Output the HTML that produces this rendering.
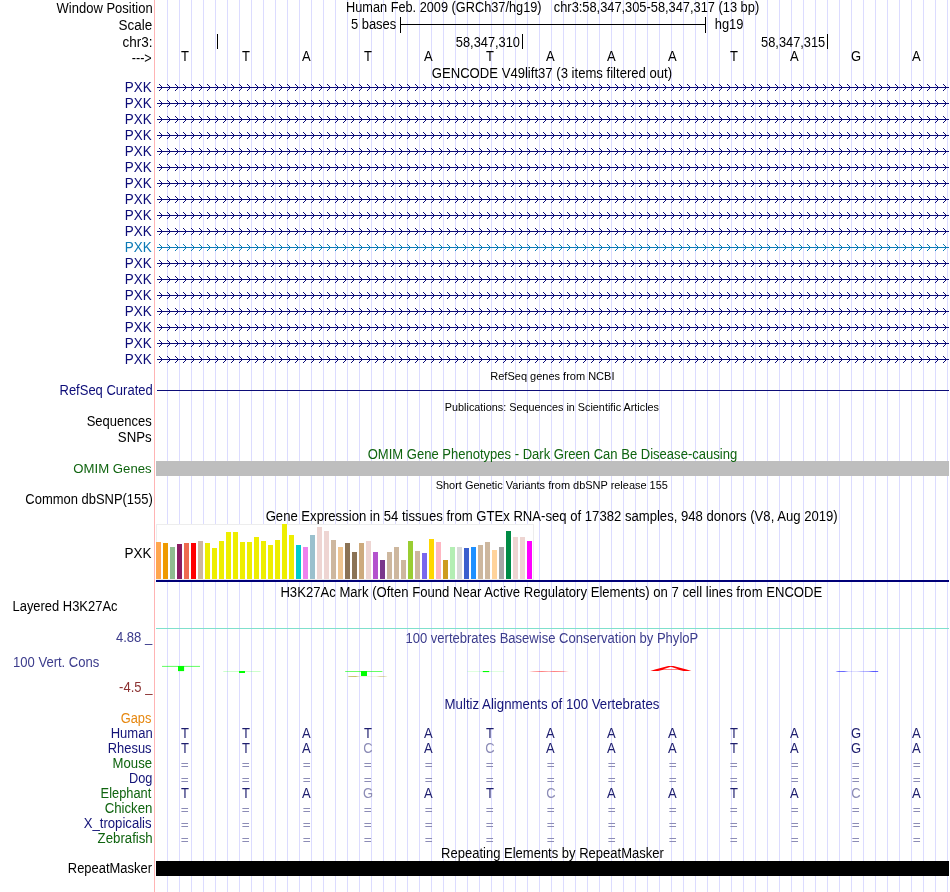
<!DOCTYPE html>
<html><head><meta charset="utf-8"><title>UCSC Genome Browser - chr3:58,347,305-58,347,317</title>
<style>
html,body{margin:0;padding:0;background:#fff;}
body{width:950px;height:892px;overflow:hidden;}
svg{display:block;font-family:"Liberation Sans", sans-serif;will-change:transform;}
text{white-space:pre;font-size:13px;}
.s{font-size:11px;}
.c{text-anchor:middle;}
</style></head><body>
<svg width="950" height="892" viewBox="0 0 950 892">
<path d="M167.5 0V892 M179.5 0V892 M191.5 0V892 M203.5 0V892 M215.5 0V892 M227.5 0V892 M239.5 0V892 M251.5 0V892 M263.5 0V892 M275.5 0V892 M287.5 0V892 M299.5 0V892 M311.5 0V892 M323.5 0V892 M335.5 0V892 M347.5 0V892 M359.5 0V892 M371.5 0V892 M383.5 0V892 M395.5 0V892 M407.5 0V892 M419.5 0V892 M431.5 0V892 M443.5 0V892 M455.5 0V892 M467.5 0V892 M479.5 0V892 M491.5 0V892 M503.5 0V892 M515.5 0V892 M527.5 0V892 M539.5 0V892 M551.5 0V892 M563.5 0V892 M575.5 0V892 M587.5 0V892 M599.5 0V892 M611.5 0V892 M623.5 0V892 M635.5 0V892 M647.5 0V892 M659.5 0V892 M671.5 0V892 M683.5 0V892 M695.5 0V892 M707.5 0V892 M719.5 0V892 M731.5 0V892 M743.5 0V892 M755.5 0V892 M767.5 0V892 M779.5 0V892 M791.5 0V892 M803.5 0V892 M815.5 0V892 M827.5 0V892 M839.5 0V892 M851.5 0V892 M863.5 0V892 M875.5 0V892 M887.5 0V892 M899.5 0V892 M911.5 0V892 M923.5 0V892 M935.5 0V892 M947.5 0V892" stroke="#dcdcff" stroke-width="1" fill="none" shape-rendering="crispEdges"/>
<path d="M154.5 0V892" stroke="#ffb4b4" stroke-width="1" fill="none" shape-rendering="crispEdges"/>
<path d="M400.5 17V33M705.5 17V33M401 24.5H705M217.5 34V49M522.5 34V49M827.5 34V49" stroke="#000" stroke-width="1" fill="none" shape-rendering="crispEdges"/>
<text class="c" transform="translate(185 61) scale(1 1.055)">T</text>
<text class="c" transform="translate(246 61) scale(1 1.055)">T</text>
<text class="c" transform="translate(306.3 61) scale(1 1.055)">A</text>
<text class="c" transform="translate(368 61) scale(1 1.055)">T</text>
<text class="c" transform="translate(428.3 61) scale(1 1.055)">A</text>
<text class="c" transform="translate(490 61) scale(1 1.055)">T</text>
<text class="c" transform="translate(550.3 61) scale(1 1.055)">A</text>
<text class="c" transform="translate(611.3 61) scale(1 1.055)">A</text>
<text class="c" transform="translate(672.3 61) scale(1 1.055)">A</text>
<text class="c" transform="translate(734 61) scale(1 1.055)">T</text>
<text class="c" transform="translate(794.3 61) scale(1 1.055)">A</text>
<text class="c" transform="translate(856 61) scale(1 1.055)">G</text>
<text class="c" transform="translate(916.3 61) scale(1 1.055)">A</text>
<defs><path id="cv" d="M157 0h792v1h-792zM159 -3h1v1h-1zm1 1h1v1h-1zm1 1h1v1h-1zm0 2h1v1h-1zm-1 1h1v1h-1zm-1 1h1v1h-1zm8 -6h1v1h-1zm1 1h1v1h-1zm1 1h1v1h-1zm0 2h1v1h-1zm-1 1h1v1h-1zm-1 1h1v1h-1zm8 -6h1v1h-1zm1 1h1v1h-1zm1 1h1v1h-1zm0 2h1v1h-1zm-1 1h1v1h-1zm-1 1h1v1h-1zm8 -6h1v1h-1zm1 1h1v1h-1zm1 1h1v1h-1zm0 2h1v1h-1zm-1 1h1v1h-1zm-1 1h1v1h-1zm8 -6h1v1h-1zm1 1h1v1h-1zm1 1h1v1h-1zm0 2h1v1h-1zm-1 1h1v1h-1zm-1 1h1v1h-1zm8 -6h1v1h-1zm1 1h1v1h-1zm1 1h1v1h-1zm0 2h1v1h-1zm-1 1h1v1h-1zm-1 1h1v1h-1zm8 -6h1v1h-1zm1 1h1v1h-1zm1 1h1v1h-1zm0 2h1v1h-1zm-1 1h1v1h-1zm-1 1h1v1h-1zm8 -6h1v1h-1zm1 1h1v1h-1zm1 1h1v1h-1zm0 2h1v1h-1zm-1 1h1v1h-1zm-1 1h1v1h-1zm8 -6h1v1h-1zm1 1h1v1h-1zm1 1h1v1h-1zm0 2h1v1h-1zm-1 1h1v1h-1zm-1 1h1v1h-1zm8 -6h1v1h-1zm1 1h1v1h-1zm1 1h1v1h-1zm0 2h1v1h-1zm-1 1h1v1h-1zm-1 1h1v1h-1zm8 -6h1v1h-1zm1 1h1v1h-1zm1 1h1v1h-1zm0 2h1v1h-1zm-1 1h1v1h-1zm-1 1h1v1h-1zm8 -6h1v1h-1zm1 1h1v1h-1zm1 1h1v1h-1zm0 2h1v1h-1zm-1 1h1v1h-1zm-1 1h1v1h-1zm8 -6h1v1h-1zm1 1h1v1h-1zm1 1h1v1h-1zm0 2h1v1h-1zm-1 1h1v1h-1zm-1 1h1v1h-1zm8 -6h1v1h-1zm1 1h1v1h-1zm1 1h1v1h-1zm0 2h1v1h-1zm-1 1h1v1h-1zm-1 1h1v1h-1zm8 -6h1v1h-1zm1 1h1v1h-1zm1 1h1v1h-1zm0 2h1v1h-1zm-1 1h1v1h-1zm-1 1h1v1h-1zm8 -6h1v1h-1zm1 1h1v1h-1zm1 1h1v1h-1zm0 2h1v1h-1zm-1 1h1v1h-1zm-1 1h1v1h-1zm8 -6h1v1h-1zm1 1h1v1h-1zm1 1h1v1h-1zm0 2h1v1h-1zm-1 1h1v1h-1zm-1 1h1v1h-1zm8 -6h1v1h-1zm1 1h1v1h-1zm1 1h1v1h-1zm0 2h1v1h-1zm-1 1h1v1h-1zm-1 1h1v1h-1zm8 -6h1v1h-1zm1 1h1v1h-1zm1 1h1v1h-1zm0 2h1v1h-1zm-1 1h1v1h-1zm-1 1h1v1h-1zm8 -6h1v1h-1zm1 1h1v1h-1zm1 1h1v1h-1zm0 2h1v1h-1zm-1 1h1v1h-1zm-1 1h1v1h-1zm8 -6h1v1h-1zm1 1h1v1h-1zm1 1h1v1h-1zm0 2h1v1h-1zm-1 1h1v1h-1zm-1 1h1v1h-1zm8 -6h1v1h-1zm1 1h1v1h-1zm1 1h1v1h-1zm0 2h1v1h-1zm-1 1h1v1h-1zm-1 1h1v1h-1zm8 -6h1v1h-1zm1 1h1v1h-1zm1 1h1v1h-1zm0 2h1v1h-1zm-1 1h1v1h-1zm-1 1h1v1h-1zm8 -6h1v1h-1zm1 1h1v1h-1zm1 1h1v1h-1zm0 2h1v1h-1zm-1 1h1v1h-1zm-1 1h1v1h-1zm8 -6h1v1h-1zm1 1h1v1h-1zm1 1h1v1h-1zm0 2h1v1h-1zm-1 1h1v1h-1zm-1 1h1v1h-1zm8 -6h1v1h-1zm1 1h1v1h-1zm1 1h1v1h-1zm0 2h1v1h-1zm-1 1h1v1h-1zm-1 1h1v1h-1zm8 -6h1v1h-1zm1 1h1v1h-1zm1 1h1v1h-1zm0 2h1v1h-1zm-1 1h1v1h-1zm-1 1h1v1h-1zm8 -6h1v1h-1zm1 1h1v1h-1zm1 1h1v1h-1zm0 2h1v1h-1zm-1 1h1v1h-1zm-1 1h1v1h-1zm8 -6h1v1h-1zm1 1h1v1h-1zm1 1h1v1h-1zm0 2h1v1h-1zm-1 1h1v1h-1zm-1 1h1v1h-1zm8 -6h1v1h-1zm1 1h1v1h-1zm1 1h1v1h-1zm0 2h1v1h-1zm-1 1h1v1h-1zm-1 1h1v1h-1zm8 -6h1v1h-1zm1 1h1v1h-1zm1 1h1v1h-1zm0 2h1v1h-1zm-1 1h1v1h-1zm-1 1h1v1h-1zm8 -6h1v1h-1zm1 1h1v1h-1zm1 1h1v1h-1zm0 2h1v1h-1zm-1 1h1v1h-1zm-1 1h1v1h-1zm8 -6h1v1h-1zm1 1h1v1h-1zm1 1h1v1h-1zm0 2h1v1h-1zm-1 1h1v1h-1zm-1 1h1v1h-1zm8 -6h1v1h-1zm1 1h1v1h-1zm1 1h1v1h-1zm0 2h1v1h-1zm-1 1h1v1h-1zm-1 1h1v1h-1zm8 -6h1v1h-1zm1 1h1v1h-1zm1 1h1v1h-1zm0 2h1v1h-1zm-1 1h1v1h-1zm-1 1h1v1h-1zm8 -6h1v1h-1zm1 1h1v1h-1zm1 1h1v1h-1zm0 2h1v1h-1zm-1 1h1v1h-1zm-1 1h1v1h-1zm8 -6h1v1h-1zm1 1h1v1h-1zm1 1h1v1h-1zm0 2h1v1h-1zm-1 1h1v1h-1zm-1 1h1v1h-1zm8 -6h1v1h-1zm1 1h1v1h-1zm1 1h1v1h-1zm0 2h1v1h-1zm-1 1h1v1h-1zm-1 1h1v1h-1zm8 -6h1v1h-1zm1 1h1v1h-1zm1 1h1v1h-1zm0 2h1v1h-1zm-1 1h1v1h-1zm-1 1h1v1h-1zm8 -6h1v1h-1zm1 1h1v1h-1zm1 1h1v1h-1zm0 2h1v1h-1zm-1 1h1v1h-1zm-1 1h1v1h-1zm8 -6h1v1h-1zm1 1h1v1h-1zm1 1h1v1h-1zm0 2h1v1h-1zm-1 1h1v1h-1zm-1 1h1v1h-1zm8 -6h1v1h-1zm1 1h1v1h-1zm1 1h1v1h-1zm0 2h1v1h-1zm-1 1h1v1h-1zm-1 1h1v1h-1zm8 -6h1v1h-1zm1 1h1v1h-1zm1 1h1v1h-1zm0 2h1v1h-1zm-1 1h1v1h-1zm-1 1h1v1h-1zm8 -6h1v1h-1zm1 1h1v1h-1zm1 1h1v1h-1zm0 2h1v1h-1zm-1 1h1v1h-1zm-1 1h1v1h-1zm8 -6h1v1h-1zm1 1h1v1h-1zm1 1h1v1h-1zm0 2h1v1h-1zm-1 1h1v1h-1zm-1 1h1v1h-1zm8 -6h1v1h-1zm1 1h1v1h-1zm1 1h1v1h-1zm0 2h1v1h-1zm-1 1h1v1h-1zm-1 1h1v1h-1zm8 -6h1v1h-1zm1 1h1v1h-1zm1 1h1v1h-1zm0 2h1v1h-1zm-1 1h1v1h-1zm-1 1h1v1h-1zm8 -6h1v1h-1zm1 1h1v1h-1zm1 1h1v1h-1zm0 2h1v1h-1zm-1 1h1v1h-1zm-1 1h1v1h-1zm8 -6h1v1h-1zm1 1h1v1h-1zm1 1h1v1h-1zm0 2h1v1h-1zm-1 1h1v1h-1zm-1 1h1v1h-1zm8 -6h1v1h-1zm1 1h1v1h-1zm1 1h1v1h-1zm0 2h1v1h-1zm-1 1h1v1h-1zm-1 1h1v1h-1zm8 -6h1v1h-1zm1 1h1v1h-1zm1 1h1v1h-1zm0 2h1v1h-1zm-1 1h1v1h-1zm-1 1h1v1h-1zm8 -6h1v1h-1zm1 1h1v1h-1zm1 1h1v1h-1zm0 2h1v1h-1zm-1 1h1v1h-1zm-1 1h1v1h-1zm8 -6h1v1h-1zm1 1h1v1h-1zm1 1h1v1h-1zm0 2h1v1h-1zm-1 1h1v1h-1zm-1 1h1v1h-1zm8 -6h1v1h-1zm1 1h1v1h-1zm1 1h1v1h-1zm0 2h1v1h-1zm-1 1h1v1h-1zm-1 1h1v1h-1zm8 -6h1v1h-1zm1 1h1v1h-1zm1 1h1v1h-1zm0 2h1v1h-1zm-1 1h1v1h-1zm-1 1h1v1h-1zm8 -6h1v1h-1zm1 1h1v1h-1zm1 1h1v1h-1zm0 2h1v1h-1zm-1 1h1v1h-1zm-1 1h1v1h-1zm8 -6h1v1h-1zm1 1h1v1h-1zm1 1h1v1h-1zm0 2h1v1h-1zm-1 1h1v1h-1zm-1 1h1v1h-1zm8 -6h1v1h-1zm1 1h1v1h-1zm1 1h1v1h-1zm0 2h1v1h-1zm-1 1h1v1h-1zm-1 1h1v1h-1zm8 -6h1v1h-1zm1 1h1v1h-1zm1 1h1v1h-1zm0 2h1v1h-1zm-1 1h1v1h-1zm-1 1h1v1h-1zm8 -6h1v1h-1zm1 1h1v1h-1zm1 1h1v1h-1zm0 2h1v1h-1zm-1 1h1v1h-1zm-1 1h1v1h-1zm8 -6h1v1h-1zm1 1h1v1h-1zm1 1h1v1h-1zm0 2h1v1h-1zm-1 1h1v1h-1zm-1 1h1v1h-1zm8 -6h1v1h-1zm1 1h1v1h-1zm1 1h1v1h-1zm0 2h1v1h-1zm-1 1h1v1h-1zm-1 1h1v1h-1zm8 -6h1v1h-1zm1 1h1v1h-1zm1 1h1v1h-1zm0 2h1v1h-1zm-1 1h1v1h-1zm-1 1h1v1h-1zm8 -6h1v1h-1zm1 1h1v1h-1zm1 1h1v1h-1zm0 2h1v1h-1zm-1 1h1v1h-1zm-1 1h1v1h-1zm8 -6h1v1h-1zm1 1h1v1h-1zm1 1h1v1h-1zm0 2h1v1h-1zm-1 1h1v1h-1zm-1 1h1v1h-1zm8 -6h1v1h-1zm1 1h1v1h-1zm1 1h1v1h-1zm0 2h1v1h-1zm-1 1h1v1h-1zm-1 1h1v1h-1zm8 -6h1v1h-1zm1 1h1v1h-1zm1 1h1v1h-1zm0 2h1v1h-1zm-1 1h1v1h-1zm-1 1h1v1h-1zm8 -6h1v1h-1zm1 1h1v1h-1zm1 1h1v1h-1zm0 2h1v1h-1zm-1 1h1v1h-1zm-1 1h1v1h-1zm8 -6h1v1h-1zm1 1h1v1h-1zm1 1h1v1h-1zm0 2h1v1h-1zm-1 1h1v1h-1zm-1 1h1v1h-1zm8 -6h1v1h-1zm1 1h1v1h-1zm1 1h1v1h-1zm0 2h1v1h-1zm-1 1h1v1h-1zm-1 1h1v1h-1zm8 -6h1v1h-1zm1 1h1v1h-1zm1 1h1v1h-1zm0 2h1v1h-1zm-1 1h1v1h-1zm-1 1h1v1h-1zm8 -6h1v1h-1zm1 1h1v1h-1zm1 1h1v1h-1zm0 2h1v1h-1zm-1 1h1v1h-1zm-1 1h1v1h-1zm8 -6h1v1h-1zm1 1h1v1h-1zm1 1h1v1h-1zm0 2h1v1h-1zm-1 1h1v1h-1zm-1 1h1v1h-1zm8 -6h1v1h-1zm1 1h1v1h-1zm1 1h1v1h-1zm0 2h1v1h-1zm-1 1h1v1h-1zm-1 1h1v1h-1zm8 -6h1v1h-1zm1 1h1v1h-1zm1 1h1v1h-1zm0 2h1v1h-1zm-1 1h1v1h-1zm-1 1h1v1h-1zm8 -6h1v1h-1zm1 1h1v1h-1zm1 1h1v1h-1zm0 2h1v1h-1zm-1 1h1v1h-1zm-1 1h1v1h-1zm8 -6h1v1h-1zm1 1h1v1h-1zm1 1h1v1h-1zm0 2h1v1h-1zm-1 1h1v1h-1zm-1 1h1v1h-1zm8 -6h1v1h-1zm1 1h1v1h-1zm1 1h1v1h-1zm0 2h1v1h-1zm-1 1h1v1h-1zm-1 1h1v1h-1zm8 -6h1v1h-1zm1 1h1v1h-1zm1 1h1v1h-1zm0 2h1v1h-1zm-1 1h1v1h-1zm-1 1h1v1h-1zm8 -6h1v1h-1zm1 1h1v1h-1zm1 1h1v1h-1zm0 2h1v1h-1zm-1 1h1v1h-1zm-1 1h1v1h-1zm8 -6h1v1h-1zm1 1h1v1h-1zm1 1h1v1h-1zm0 2h1v1h-1zm-1 1h1v1h-1zm-1 1h1v1h-1zm8 -6h1v1h-1zm1 1h1v1h-1zm1 1h1v1h-1zm0 2h1v1h-1zm-1 1h1v1h-1zm-1 1h1v1h-1zm8 -6h1v1h-1zm1 1h1v1h-1zm1 1h1v1h-1zm0 2h1v1h-1zm-1 1h1v1h-1zm-1 1h1v1h-1zm8 -6h1v1h-1zm1 1h1v1h-1zm1 1h1v1h-1zm0 2h1v1h-1zm-1 1h1v1h-1zm-1 1h1v1h-1zm8 -6h1v1h-1zm1 1h1v1h-1zm1 1h1v1h-1zm0 2h1v1h-1zm-1 1h1v1h-1zm-1 1h1v1h-1zm8 -6h1v1h-1zm1 1h1v1h-1zm1 1h1v1h-1zm0 2h1v1h-1zm-1 1h1v1h-1zm-1 1h1v1h-1zm8 -6h1v1h-1zm1 1h1v1h-1zm1 1h1v1h-1zm0 2h1v1h-1zm-1 1h1v1h-1zm-1 1h1v1h-1zm8 -6h1v1h-1zm1 1h1v1h-1zm1 1h1v1h-1zm0 2h1v1h-1zm-1 1h1v1h-1zm-1 1h1v1h-1zm8 -6h1v1h-1zm1 1h1v1h-1zm1 1h1v1h-1zm0 2h1v1h-1zm-1 1h1v1h-1zm-1 1h1v1h-1zm8 -6h1v1h-1zm1 1h1v1h-1zm1 1h1v1h-1zm0 2h1v1h-1zm-1 1h1v1h-1zm-1 1h1v1h-1zm8 -6h1v1h-1zm1 1h1v1h-1zm1 1h1v1h-1zm0 2h1v1h-1zm-1 1h1v1h-1zm-1 1h1v1h-1zm8 -6h1v1h-1zm1 1h1v1h-1zm1 1h1v1h-1zm0 2h1v1h-1zm-1 1h1v1h-1zm-1 1h1v1h-1zm8 -6h1v1h-1zm1 1h1v1h-1zm1 1h1v1h-1zm0 2h1v1h-1zm-1 1h1v1h-1zm-1 1h1v1h-1zm8 -6h1v1h-1zm1 1h1v1h-1zm1 1h1v1h-1zm0 2h1v1h-1zm-1 1h1v1h-1zm-1 1h1v1h-1zm8 -6h1v1h-1zm1 1h1v1h-1zm1 1h1v1h-1zm0 2h1v1h-1zm-1 1h1v1h-1zm-1 1h1v1h-1zm8 -6h1v1h-1zm1 1h1v1h-1zm1 1h1v1h-1zm0 2h1v1h-1zm-1 1h1v1h-1zm-1 1h1v1h-1zm8 -6h1v1h-1zm1 1h1v1h-1zm1 1h1v1h-1zm0 2h1v1h-1zm-1 1h1v1h-1zm-1 1h1v1h-1zm8 -6h1v1h-1zm1 1h1v1h-1zm1 1h1v1h-1zm0 2h1v1h-1zm-1 1h1v1h-1zm-1 1h1v1h-1zm8 -6h1v1h-1zm1 1h1v1h-1zm1 1h1v1h-1zm0 2h1v1h-1zm-1 1h1v1h-1zm-1 1h1v1h-1z" shape-rendering="crispEdges"/></defs>
<use href="#cv" y="87" fill="#0c0c78"/>
<use href="#cv" y="103" fill="#0c0c78"/>
<use href="#cv" y="119" fill="#0c0c78"/>
<use href="#cv" y="135" fill="#0c0c78"/>
<use href="#cv" y="151" fill="#0c0c78"/>
<use href="#cv" y="167" fill="#0c0c78"/>
<use href="#cv" y="183" fill="#0c0c78"/>
<use href="#cv" y="199" fill="#0c0c78"/>
<use href="#cv" y="215" fill="#0c0c78"/>
<use href="#cv" y="231" fill="#0c0c78"/>
<use href="#cv" y="247" fill="#0c7ab6"/>
<use href="#cv" y="263" fill="#0c0c78"/>
<use href="#cv" y="279" fill="#0c0c78"/>
<use href="#cv" y="295" fill="#0c0c78"/>
<use href="#cv" y="311" fill="#0c0c78"/>
<use href="#cv" y="327" fill="#0c0c78"/>
<use href="#cv" y="343" fill="#0c0c78"/>
<use href="#cv" y="359" fill="#0c0c78"/>
<rect x="157" y="390" width="792" height="1" fill="#0c0c78" shape-rendering="crispEdges"/>
<rect x="156" y="461" width="793" height="15" fill="#bebebe" shape-rendering="crispEdges"/>
<rect x="156.5" y="524.5" width="377" height="55" fill="#fff" stroke="#ededed" shape-rendering="crispEdges"/>
<g shape-rendering="crispEdges">
<rect x="156" y="542" width="5" height="37" fill="#FFA54F"/>
<rect x="163" y="543" width="5" height="36" fill="#EE9A00"/>
<rect x="170" y="547" width="5" height="32" fill="#8FBC8F"/>
<rect x="177" y="544" width="5" height="35" fill="#8B1C62"/>
<rect x="184" y="543" width="5" height="36" fill="#EE6A50"/>
<rect x="191" y="543" width="5" height="36" fill="#FF0000"/>
<rect x="198" y="541" width="5" height="38" fill="#CDB79E"/>
<rect x="205" y="543" width="5" height="36" fill="#EEEE00"/>
<rect x="212" y="548" width="5" height="31" fill="#EEEE00"/>
<rect x="219" y="541" width="5" height="38" fill="#EEEE00"/>
<rect x="226" y="532" width="5" height="47" fill="#EEEE00"/>
<rect x="233" y="532" width="5" height="47" fill="#EEEE00"/>
<rect x="240" y="542" width="5" height="37" fill="#EEEE00"/>
<rect x="247" y="542" width="5" height="37" fill="#EEEE00"/>
<rect x="254" y="537" width="5" height="42" fill="#EEEE00"/>
<rect x="261" y="541" width="5" height="38" fill="#EEEE00"/>
<rect x="268" y="545" width="5" height="34" fill="#EEEE00"/>
<rect x="275" y="540" width="5" height="39" fill="#EEEE00"/>
<rect x="282" y="524" width="5" height="55" fill="#EEEE00"/>
<rect x="289" y="535" width="5" height="44" fill="#EEEE00"/>
<rect x="296" y="545" width="5" height="34" fill="#00CDCD"/>
<rect x="303" y="547" width="5" height="32" fill="#EE82EE"/>
<rect x="310" y="535" width="5" height="44" fill="#9AC0CD"/>
<rect x="317" y="527" width="5" height="52" fill="#EED5D2"/>
<rect x="324" y="531" width="5" height="48" fill="#EED5D2"/>
<rect x="331" y="540" width="5" height="39" fill="#CDB79E"/>
<rect x="338" y="547" width="5" height="32" fill="#EEC591"/>
<rect x="345" y="543" width="5" height="36" fill="#8B7355"/>
<rect x="352" y="552" width="5" height="27" fill="#8B7355"/>
<rect x="359" y="543" width="5" height="36" fill="#CDAA7D"/>
<rect x="366" y="541" width="5" height="38" fill="#EED5D2"/>
<rect x="373" y="552" width="5" height="27" fill="#B452CD"/>
<rect x="380" y="560" width="5" height="19" fill="#7A378B"/>
<rect x="387" y="552" width="5" height="27" fill="#CDB79E"/>
<rect x="394" y="547" width="5" height="32" fill="#CDB79E"/>
<rect x="401" y="560" width="5" height="19" fill="#CDB79E"/>
<rect x="408" y="541" width="5" height="38" fill="#9ACD32"/>
<rect x="415" y="551" width="5" height="28" fill="#CDB79E"/>
<rect x="422" y="553" width="5" height="26" fill="#7A67EE"/>
<rect x="429" y="539" width="5" height="40" fill="#FFD700"/>
<rect x="436" y="542" width="5" height="37" fill="#FFB6C1"/>
<rect x="443" y="560" width="5" height="19" fill="#CD9B1D"/>
<rect x="450" y="547" width="5" height="32" fill="#B4EEB4"/>
<rect x="457" y="547" width="5" height="32" fill="#D9D9D9"/>
<rect x="464" y="548" width="5" height="31" fill="#3A5FCD"/>
<rect x="471" y="547" width="5" height="32" fill="#1E90FF"/>
<rect x="478" y="545" width="5" height="34" fill="#CDB79E"/>
<rect x="485" y="542" width="5" height="37" fill="#CDB79E"/>
<rect x="492" y="550" width="5" height="29" fill="#FFD39B"/>
<rect x="499" y="547" width="5" height="32" fill="#A6A6A6"/>
<rect x="506" y="531" width="5" height="48" fill="#008B45"/>
<rect x="513" y="537" width="5" height="42" fill="#EED5D2"/>
<rect x="520" y="537" width="5" height="42" fill="#EED5D2"/>
<rect x="527" y="541" width="5" height="38" fill="#FF00FF"/>
<rect x="156" y="580" width="793" height="2" fill="#000078"/>
</g>
<rect x="156" y="628" width="793" height="1" fill="#7fe0cc" shape-rendering="crispEdges"/>
<path d="M162 666.4H200" stroke="#00ff00" stroke-opacity=".62" stroke-width="1"/><rect x="178" y="666" width="6.1" height="5.1" fill="#00ff00"/>
<path d="M223.3 671.5H260.5" stroke="#00ff00" stroke-opacity=".2" stroke-width="1"/><rect x="239" y="671" width="6" height="2" fill="#00ff00"/>
<path d="M345.2 671.5H382.4" stroke="#00ff00" stroke-opacity=".6" stroke-width="1"/><rect x="361" y="671" width="6" height="5" fill="#00ff00"/>
<linearGradient id="go" gradientUnits="userSpaceOnUse" x1="347.5" x2="387.5" y1="0" y2="0"><stop offset="0" stop-color="#a89c14" stop-opacity="0.1"/><stop offset="0.04" stop-color="#a89c14" stop-opacity="0.55"/><stop offset="0.2" stop-color="#a89c14" stop-opacity="0.65"/><stop offset="0.3" stop-color="#a89c14" stop-opacity="0.12"/><stop offset="0.72" stop-color="#a89c14" stop-opacity="0.12"/><stop offset="0.82" stop-color="#a89c14" stop-opacity="0.4"/><stop offset="0.92" stop-color="#a89c14" stop-opacity="0.35"/><stop offset="1" stop-color="#a89c14" stop-opacity="0.05"/></linearGradient>
<rect x="347.5" y="676" width="40.0" height="1" fill="url(#go)"/>
<path d="M467.4 671.5H504.3" stroke="#00ff00" stroke-opacity=".13" stroke-width="1"/><rect x="482.8" y="671" width="6.4" height="1.1" fill="#00ff00"/>
<linearGradient id="gr" gradientUnits="userSpaceOnUse" x1="529" x2="569" y1="0" y2="0"><stop offset="0" stop-color="#ff0000" stop-opacity="0"/><stop offset="0.12" stop-color="#ff0000" stop-opacity="0.3"/><stop offset="0.32" stop-color="#ff0000" stop-opacity="0.5"/><stop offset="0.5" stop-color="#ff0000" stop-opacity="0.28"/><stop offset="0.62" stop-color="#ff0000" stop-opacity="0.5"/><stop offset="0.85" stop-color="#ff0000" stop-opacity="0.35"/><stop offset="1" stop-color="#ff0000" stop-opacity="0"/></linearGradient>
<rect x="529" y="671" width="40.0" height="1" fill="url(#gr)"/>
<path fill-rule="evenodd" fill="#ff0000" d="M650.3 670.9L655 669.4L668.2 666H673.4L686.6 669.4L691.3 670.9H683.5L678.4 669.7H663.2L658 670.9ZM663.3 669.2L670.8 666.85L678.3 669.2Z"/>
<linearGradient id="gb" gradientUnits="userSpaceOnUse" x1="835.5" x2="878.2" y1="0" y2="0"><stop offset="0" stop-color="#0000ff" stop-opacity="0.05"/><stop offset="0.06" stop-color="#0000ff" stop-opacity="0.55"/><stop offset="0.2" stop-color="#0000ff" stop-opacity="0.6"/><stop offset="0.3" stop-color="#0000ff" stop-opacity="0.15"/><stop offset="0.5" stop-color="#0000ff" stop-opacity="0.12"/><stop offset="0.6" stop-color="#0000ff" stop-opacity="0.25"/><stop offset="0.78" stop-color="#0000ff" stop-opacity="0.35"/><stop offset="0.88" stop-color="#0000ff" stop-opacity="0.65"/><stop offset="1" stop-color="#0000ff" stop-opacity="0.6"/></linearGradient>
<rect x="835.5" y="671" width="42.7" height="1" fill="url(#gb)"/>
<text class="c" transform="translate(185 738) scale(1 1.055)" fill="#1e1e6e">T</text>
<text class="c" transform="translate(246 738) scale(1 1.055)" fill="#1e1e6e">T</text>
<text class="c" transform="translate(306.3 738) scale(1 1.055)" fill="#1e1e6e">A</text>
<text class="c" transform="translate(368 738) scale(1 1.055)" fill="#1e1e6e">T</text>
<text class="c" transform="translate(428.3 738) scale(1 1.055)" fill="#1e1e6e">A</text>
<text class="c" transform="translate(490 738) scale(1 1.055)" fill="#1e1e6e">T</text>
<text class="c" transform="translate(550.3 738) scale(1 1.055)" fill="#1e1e6e">A</text>
<text class="c" transform="translate(611.3 738) scale(1 1.055)" fill="#1e1e6e">A</text>
<text class="c" transform="translate(672.3 738) scale(1 1.055)" fill="#1e1e6e">A</text>
<text class="c" transform="translate(734 738) scale(1 1.055)" fill="#1e1e6e">T</text>
<text class="c" transform="translate(794.3 738) scale(1 1.055)" fill="#1e1e6e">A</text>
<text class="c" transform="translate(856 738) scale(1 1.055)" fill="#1e1e6e">G</text>
<text class="c" transform="translate(916.3 738) scale(1 1.055)" fill="#1e1e6e">A</text>
<text class="c" transform="translate(185 753) scale(1 1.055)" fill="#1e1e6e">T</text>
<text class="c" transform="translate(246 753) scale(1 1.055)" fill="#1e1e6e">T</text>
<text class="c" transform="translate(306.3 753) scale(1 1.055)" fill="#1e1e6e">A</text>
<text class="c" transform="translate(368 753) scale(1 1.055)" fill="#8c8cb6">C</text>
<text class="c" transform="translate(428.3 753) scale(1 1.055)" fill="#1e1e6e">A</text>
<text class="c" transform="translate(490 753) scale(1 1.055)" fill="#8c8cb6">C</text>
<text class="c" transform="translate(550.3 753) scale(1 1.055)" fill="#1e1e6e">A</text>
<text class="c" transform="translate(611.3 753) scale(1 1.055)" fill="#1e1e6e">A</text>
<text class="c" transform="translate(672.3 753) scale(1 1.055)" fill="#1e1e6e">A</text>
<text class="c" transform="translate(734 753) scale(1 1.055)" fill="#1e1e6e">T</text>
<text class="c" transform="translate(794.3 753) scale(1 1.055)" fill="#1e1e6e">A</text>
<text class="c" transform="translate(856 753) scale(1 1.055)" fill="#1e1e6e">G</text>
<text class="c" transform="translate(916.3 753) scale(1 1.055)" fill="#1e1e6e">A</text>
<text class="c" transform="translate(184.7 769.1) scale(1.05 0.82)" fill="#8c8cb6">=</text>
<text class="c" transform="translate(245.7 769.1) scale(1.05 0.82)" fill="#8c8cb6">=</text>
<text class="c" transform="translate(306.7 769.1) scale(1.05 0.82)" fill="#8c8cb6">=</text>
<text class="c" transform="translate(367.7 769.1) scale(1.05 0.82)" fill="#8c8cb6">=</text>
<text class="c" transform="translate(428.7 769.1) scale(1.05 0.82)" fill="#8c8cb6">=</text>
<text class="c" transform="translate(489.7 769.1) scale(1.05 0.82)" fill="#8c8cb6">=</text>
<text class="c" transform="translate(550.7 769.1) scale(1.05 0.82)" fill="#8c8cb6">=</text>
<text class="c" transform="translate(611.7 769.1) scale(1.05 0.82)" fill="#8c8cb6">=</text>
<text class="c" transform="translate(672.7 769.1) scale(1.05 0.82)" fill="#8c8cb6">=</text>
<text class="c" transform="translate(733.7 769.1) scale(1.05 0.82)" fill="#8c8cb6">=</text>
<text class="c" transform="translate(794.7 769.1) scale(1.05 0.82)" fill="#8c8cb6">=</text>
<text class="c" transform="translate(855.7 769.1) scale(1.05 0.82)" fill="#8c8cb6">=</text>
<text class="c" transform="translate(916.7 769.1) scale(1.05 0.82)" fill="#8c8cb6">=</text>
<text class="c" transform="translate(184.7 784.1) scale(1.05 0.82)" fill="#8c8cb6">=</text>
<text class="c" transform="translate(245.7 784.1) scale(1.05 0.82)" fill="#8c8cb6">=</text>
<text class="c" transform="translate(306.7 784.1) scale(1.05 0.82)" fill="#8c8cb6">=</text>
<text class="c" transform="translate(367.7 784.1) scale(1.05 0.82)" fill="#8c8cb6">=</text>
<text class="c" transform="translate(428.7 784.1) scale(1.05 0.82)" fill="#8c8cb6">=</text>
<text class="c" transform="translate(489.7 784.1) scale(1.05 0.82)" fill="#8c8cb6">=</text>
<text class="c" transform="translate(550.7 784.1) scale(1.05 0.82)" fill="#8c8cb6">=</text>
<text class="c" transform="translate(611.7 784.1) scale(1.05 0.82)" fill="#8c8cb6">=</text>
<text class="c" transform="translate(672.7 784.1) scale(1.05 0.82)" fill="#8c8cb6">=</text>
<text class="c" transform="translate(733.7 784.1) scale(1.05 0.82)" fill="#8c8cb6">=</text>
<text class="c" transform="translate(794.7 784.1) scale(1.05 0.82)" fill="#8c8cb6">=</text>
<text class="c" transform="translate(855.7 784.1) scale(1.05 0.82)" fill="#8c8cb6">=</text>
<text class="c" transform="translate(916.7 784.1) scale(1.05 0.82)" fill="#8c8cb6">=</text>
<text class="c" transform="translate(185 798) scale(1 1.055)" fill="#1e1e6e">T</text>
<text class="c" transform="translate(246 798) scale(1 1.055)" fill="#1e1e6e">T</text>
<text class="c" transform="translate(306.3 798) scale(1 1.055)" fill="#1e1e6e">A</text>
<text class="c" transform="translate(368 798) scale(1 1.055)" fill="#8c8cb6">G</text>
<text class="c" transform="translate(428.3 798) scale(1 1.055)" fill="#1e1e6e">A</text>
<text class="c" transform="translate(490 798) scale(1 1.055)" fill="#1e1e6e">T</text>
<text class="c" transform="translate(551 798) scale(1 1.055)" fill="#8c8cb6">C</text>
<text class="c" transform="translate(611.3 798) scale(1 1.055)" fill="#1e1e6e">A</text>
<text class="c" transform="translate(672.3 798) scale(1 1.055)" fill="#1e1e6e">A</text>
<text class="c" transform="translate(734 798) scale(1 1.055)" fill="#1e1e6e">T</text>
<text class="c" transform="translate(794.3 798) scale(1 1.055)" fill="#1e1e6e">A</text>
<text class="c" transform="translate(856 798) scale(1 1.055)" fill="#8c8cb6">C</text>
<text class="c" transform="translate(916.3 798) scale(1 1.055)" fill="#1e1e6e">A</text>
<text class="c" transform="translate(184.7 814.1) scale(1.05 0.82)" fill="#8c8cb6">=</text>
<text class="c" transform="translate(245.7 814.1) scale(1.05 0.82)" fill="#8c8cb6">=</text>
<text class="c" transform="translate(306.7 814.1) scale(1.05 0.82)" fill="#8c8cb6">=</text>
<text class="c" transform="translate(367.7 814.1) scale(1.05 0.82)" fill="#8c8cb6">=</text>
<text class="c" transform="translate(428.7 814.1) scale(1.05 0.82)" fill="#8c8cb6">=</text>
<text class="c" transform="translate(489.7 814.1) scale(1.05 0.82)" fill="#8c8cb6">=</text>
<text class="c" transform="translate(550.7 814.1) scale(1.05 0.82)" fill="#8c8cb6">=</text>
<text class="c" transform="translate(611.7 814.1) scale(1.05 0.82)" fill="#8c8cb6">=</text>
<text class="c" transform="translate(672.7 814.1) scale(1.05 0.82)" fill="#8c8cb6">=</text>
<text class="c" transform="translate(733.7 814.1) scale(1.05 0.82)" fill="#8c8cb6">=</text>
<text class="c" transform="translate(794.7 814.1) scale(1.05 0.82)" fill="#8c8cb6">=</text>
<text class="c" transform="translate(855.7 814.1) scale(1.05 0.82)" fill="#8c8cb6">=</text>
<text class="c" transform="translate(916.7 814.1) scale(1.05 0.82)" fill="#8c8cb6">=</text>
<text class="c" transform="translate(184.7 829.1) scale(1.05 0.82)" fill="#8c8cb6">=</text>
<text class="c" transform="translate(245.7 829.1) scale(1.05 0.82)" fill="#8c8cb6">=</text>
<text class="c" transform="translate(306.7 829.1) scale(1.05 0.82)" fill="#8c8cb6">=</text>
<text class="c" transform="translate(367.7 829.1) scale(1.05 0.82)" fill="#8c8cb6">=</text>
<text class="c" transform="translate(428.7 829.1) scale(1.05 0.82)" fill="#8c8cb6">=</text>
<text class="c" transform="translate(489.7 829.1) scale(1.05 0.82)" fill="#8c8cb6">=</text>
<text class="c" transform="translate(550.7 829.1) scale(1.05 0.82)" fill="#8c8cb6">=</text>
<text class="c" transform="translate(611.7 829.1) scale(1.05 0.82)" fill="#8c8cb6">=</text>
<text class="c" transform="translate(672.7 829.1) scale(1.05 0.82)" fill="#8c8cb6">=</text>
<text class="c" transform="translate(733.7 829.1) scale(1.05 0.82)" fill="#8c8cb6">=</text>
<text class="c" transform="translate(794.7 829.1) scale(1.05 0.82)" fill="#8c8cb6">=</text>
<text class="c" transform="translate(855.7 829.1) scale(1.05 0.82)" fill="#8c8cb6">=</text>
<text class="c" transform="translate(916.7 829.1) scale(1.05 0.82)" fill="#8c8cb6">=</text>
<text class="c" transform="translate(184.7 844.1) scale(1.05 0.82)" fill="#8c8cb6">=</text>
<text class="c" transform="translate(245.7 844.1) scale(1.05 0.82)" fill="#8c8cb6">=</text>
<text class="c" transform="translate(306.7 844.1) scale(1.05 0.82)" fill="#8c8cb6">=</text>
<text class="c" transform="translate(367.7 844.1) scale(1.05 0.82)" fill="#8c8cb6">=</text>
<text class="c" transform="translate(428.7 844.1) scale(1.05 0.82)" fill="#8c8cb6">=</text>
<text class="c" transform="translate(489.7 844.1) scale(1.05 0.82)" fill="#8c8cb6">=</text>
<text class="c" transform="translate(550.7 844.1) scale(1.05 0.82)" fill="#8c8cb6">=</text>
<text class="c" transform="translate(611.7 844.1) scale(1.05 0.82)" fill="#8c8cb6">=</text>
<text class="c" transform="translate(672.7 844.1) scale(1.05 0.82)" fill="#8c8cb6">=</text>
<text class="c" transform="translate(733.7 844.1) scale(1.05 0.82)" fill="#8c8cb6">=</text>
<text class="c" transform="translate(794.7 844.1) scale(1.05 0.82)" fill="#8c8cb6">=</text>
<text class="c" transform="translate(855.7 844.1) scale(1.05 0.82)" fill="#8c8cb6">=</text>
<text class="c" transform="translate(916.7 844.1) scale(1.05 0.82)" fill="#8c8cb6">=</text>
<rect x="156" y="861" width="793" height="15" fill="#000" shape-rendering="crispEdges"/>
<text transform="translate(56.55 13) scale(1.0000 1.055)">Window Position</text>
<text transform="translate(118.52 30) scale(1.0368 1.055)">Scale</text>
<text transform="translate(122.48 47) scale(1.0385 1.055)">chr3:</text>
<text transform="translate(131.71 63.3) scale(0.9744 1.055)">---&gt;</text>
<text transform="translate(346.02 12) scale(0.9810 1.055)">Human Feb. 2009 (GRCh37/hg19)</text>
<text transform="translate(553.81 12) scale(0.9881 1.055)">chr3:58,347,305-58,347,317 (13 bp)</text>
<text transform="translate(350.90 29) scale(0.9978 1.055)">5 bases</text>
<text transform="translate(714.71 29) scale(0.9945 1.055)">hg19</text>
<text transform="translate(455.81 47) scale(0.9875 1.055)">58,347,310</text>
<text transform="translate(761.11 47) scale(0.9859 1.055)">58,347,315</text>
<text transform="translate(431.74 78) scale(1.0091 1.055)">GENCODE V49lift37 (3 items filtered out)</text>
<text transform="translate(124.87 92) scale(1.0343 1.055)" fill="#0c0c78">PXK</text>
<text transform="translate(124.87 108) scale(1.0343 1.055)" fill="#0c0c78">PXK</text>
<text transform="translate(124.87 124) scale(1.0343 1.055)" fill="#0c0c78">PXK</text>
<text transform="translate(124.87 140) scale(1.0343 1.055)" fill="#0c0c78">PXK</text>
<text transform="translate(124.87 156) scale(1.0343 1.055)" fill="#0c0c78">PXK</text>
<text transform="translate(124.87 172) scale(1.0343 1.055)" fill="#0c0c78">PXK</text>
<text transform="translate(124.87 188) scale(1.0343 1.055)" fill="#0c0c78">PXK</text>
<text transform="translate(124.87 204) scale(1.0343 1.055)" fill="#0c0c78">PXK</text>
<text transform="translate(124.87 220) scale(1.0343 1.055)" fill="#0c0c78">PXK</text>
<text transform="translate(124.87 236) scale(1.0343 1.055)" fill="#0c0c78">PXK</text>
<text transform="translate(124.87 252) scale(1.0343 1.055)" fill="#0c7ab6">PXK</text>
<text transform="translate(124.87 268) scale(1.0343 1.055)" fill="#0c0c78">PXK</text>
<text transform="translate(124.87 284) scale(1.0343 1.055)" fill="#0c0c78">PXK</text>
<text transform="translate(124.87 300) scale(1.0343 1.055)" fill="#0c0c78">PXK</text>
<text transform="translate(124.87 316) scale(1.0343 1.055)" fill="#0c0c78">PXK</text>
<text transform="translate(124.87 332) scale(1.0343 1.055)" fill="#0c0c78">PXK</text>
<text transform="translate(124.87 348) scale(1.0343 1.055)" fill="#0c0c78">PXK</text>
<text transform="translate(124.87 364) scale(1.0343 1.055)" fill="#0c0c78">PXK</text>
<text transform="translate(490.30 380) scale(1.0008 1.0)" class="s">RefSeq genes from NCBI</text>
<text transform="translate(59.50 395) scale(1.0000 1.055)" fill="#0c0c78">RefSeq Curated</text>
<text transform="translate(444.81 411) scale(0.9854 1.0)" class="s">Publications: Sequences in Scientific Articles</text>
<text transform="translate(86.65 426) scale(1.0008 1.055)">Sequences</text>
<text transform="translate(117.84 442) scale(1.0187 1.055)">SNPs</text>
<text transform="translate(367.65 459) scale(1.0034 1.055)" fill="#0f640f">OMIM Gene Phenotypes - Dark Green Can Be Disease-causing</text>
<text transform="translate(73.34 473) scale(1.0132 1.055)" fill="#0f640f">OMIM Genes</text>
<text transform="translate(435.70 489) scale(0.9972 1.0)" class="s">Short Genetic Variants from dbSNP release 155</text>
<text transform="translate(25.35 504) scale(0.9980 1.055)">Common dbSNP(155)</text>
<text transform="translate(265.64 521) scale(1.0100 1.055)">Gene Expression in 54 tissues from GTEx RNA-seq of 17382 samples, 948 donors (V8, Aug 2019)</text>
<text transform="translate(124.46 558) scale(1.0384 1.055)">PXK</text>
<text transform="translate(280.39 597) scale(1.0091 1.055)">H3K27Ac Mark (Often Found Near Active Regulatory Elements) on 7 cell lines from ENCODE</text>
<text transform="translate(12.50 611) scale(0.9952 1.055)">Layered H3K27Ac</text>
<text transform="translate(115.95 642) scale(1.0056 1.055)" fill="#3c3c8c">4.88 _</text>
<text transform="translate(405.40 643) scale(1.0040 1.055)" fill="#3c3c8c">100 vertebrates Basewise Conservation by PhyloP</text>
<text transform="translate(12.99 667) scale(1.0059 1.055)" fill="#3c3c8c">100 Vert. Cons</text>
<text transform="translate(119.10 692) scale(1.0015 1.055)" fill="#8c3232">-4.5 _</text>
<text transform="translate(444.58 709) scale(1.0191 1.055)" fill="#141478">Multiz Alignments of 100 Vertebrates</text>
<text transform="translate(120.76 723) scale(0.9882 1.055)" fill="#e6870f">Gaps</text>
<text transform="translate(110.70 738) scale(1.0025 1.055)" fill="#141478">Human</text>
<text transform="translate(107.81 753) scale(0.9929 1.055)" fill="#141478">Rhesus</text>
<text transform="translate(112.59 768) scale(1.0107 1.055)" fill="#0f640f">Mouse</text>
<text transform="translate(128.92 783) scale(0.9818 1.055)" fill="#141478">Dog</text>
<text transform="translate(100.61 798) scale(0.9871 1.055)" fill="#0f640f">Elephant</text>
<text transform="translate(104.64 813) scale(1.0198 1.055)" fill="#0f640f">Chicken</text>
<text transform="translate(83.69 828) scale(1.0113 1.055)" fill="#141478">X_tropicalis</text>
<text transform="translate(97.59 843) scale(1.0180 1.055)" fill="#0f640f">Zebrafish</text>
<text transform="translate(441.10 858) scale(1.0016 1.055)">Repeating Elements by RepeatMasker</text>
<text transform="translate(67.80 873) scale(0.9970 1.055)">RepeatMasker</text>
</svg></body></html>
